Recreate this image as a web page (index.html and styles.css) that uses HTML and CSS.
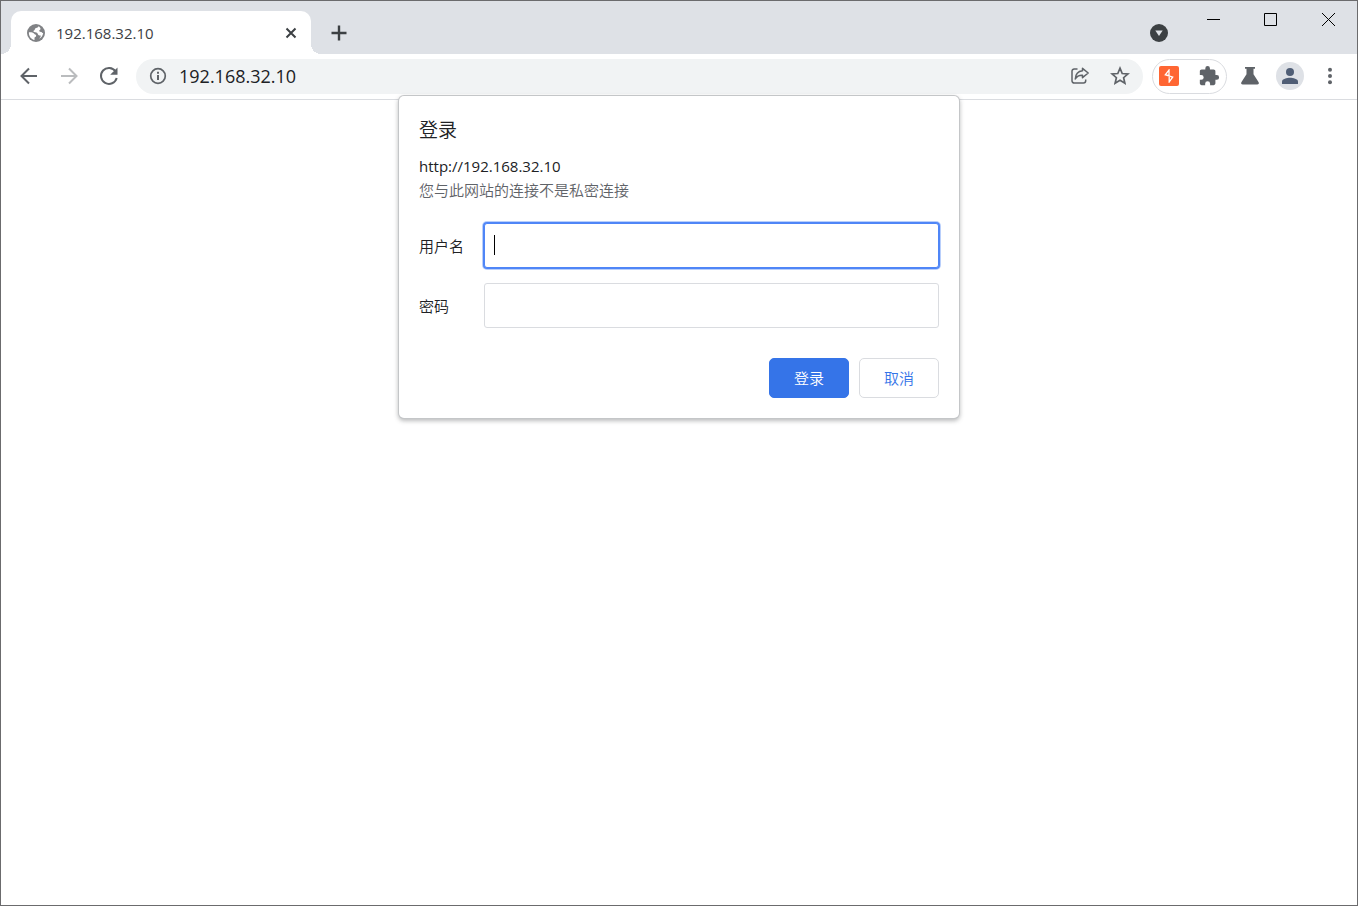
FILE: index.html
```html
<!DOCTYPE html>
<html lang="zh-CN">
<head>
<meta charset="utf-8">
<title>192.168.32.10</title>
<link rel="stylesheet" href="styles.css">
</head>
<body>
<div class="window">
  <header class="tabstrip">
    <div class="tab">
      <svg class="tab-icon" width="20" height="20" viewBox="0 0 20 20" aria-hidden="true">
        <circle cx="10" cy="10" r="9" fill="#808285"/>
        <path fill="#fff" d="M12.600 3.200C12 5.200 10 4.600 9.200 5.500c-.7.700.1 1.500-1.200 2.100-.8.400-.7 1.200.1 1.500 1.500.5 3.400.2 3.700 1.900.3 1.300 1.400 1.500 2.900 1.500.2 1.400-.8 2.200-1.700 3.200A7.200 7.200 0 0 0 17.200 10c-.9 0-1.200-.2-1.600-1-.8-.3-2.200 0-2.400-1.100-.1-1 1.400-1.100 1.300-2.200-.1-.8-.8-1.800-1.900-2.500zM2.900 9.300c1.800-.2 4.500.2 5.100 1.300.8 1.200 2.200.8 2.200 2.200 0 1.200-1.700 1.100-1.700 2.200v2c-3.300-.5-5.900-3.700-5.600-7.700z"/>
      </svg>
      <span class="tab-title">192.168.32.10</span>
      <button class="icon-button tab-close" type="button" aria-label="关闭标签页">
        <svg width="12" height="12" viewBox="0 0 12 12"><path d="M1.500 1.500l9 9M10.500 1.500l-9 9" stroke="#3c4043" stroke-width="2"/></svg>
      </button>
    </div>
    <button class="icon-button new-tab" type="button" aria-label="新标签页">
      <svg width="16" height="16" viewBox="0 0 16 16"><path d="M8 .5v15M.5 8h15" stroke="#3c4043" stroke-width="2.400"/></svg>
    </button>
    <button class="icon-button tab-search" type="button" aria-label="搜索标签页">
      <svg width="18" height="18" viewBox="0 0 18 18"><circle cx="9" cy="9" r="9" fill="#3c4043"/><path d="M5.300 6.500h7.400L9 12z" fill="#dee1e6"/></svg>
    </button>
    <div class="window-controls">
      <button class="icon-button" type="button" aria-label="最小化"><svg width="13" height="13" viewBox="0 0 13 13"><path d="M0 6.500h13" stroke="#000"/></svg></button>
      <button class="icon-button" type="button" aria-label="最大化"><svg width="13" height="13" viewBox="0 0 13 13"><path d="M.5.5h12v12H.5z" fill="none" stroke="#000"/></svg></button>
      <button class="icon-button" type="button" aria-label="关闭"><svg width="13" height="13" viewBox="0 0 13 13"><path d="M0 0l13 13M13 0L0 13" stroke="#000"/></svg></button>
    </div>
  </header>

  <nav class="toolbar">
    <div class="nav-buttons">
      <button class="icon-button" type="button" aria-label="后退"><svg width="24" height="24" viewBox="0 0 24 24"><path d="M20 12H5M12 4.500L4.500 12l7.500 7.500" fill="none" stroke="#5f6368" stroke-width="2"/></svg></button>
      <button class="icon-button" type="button" aria-label="前进"><svg width="24" height="24" viewBox="0 0 24 24"><path d="M4 12h15M12 4.500l7.500 7.500-7.500 7.500" fill="none" stroke="#babcbe" stroke-width="2"/></svg></button>
      <button class="icon-button" type="button" aria-label="重新加载"><svg width="24" height="24" viewBox="0 0 24 24"><path d="M18.600 7.400A8 8 0 1 0 19.700 14" fill="none" stroke="#5f6368" stroke-width="2"/><path d="M20.500 3.500v7.300h-7.300z" fill="#5f6368"/></svg></button>
    </div>
    <div class="omnibox">
      <button class="icon-button site-info" type="button" aria-label="查看网站信息"><svg width="18" height="18" viewBox="0 0 18 18"><circle cx="9" cy="9" r="7.300" fill="none" stroke="#5f6368" stroke-width="1.700"/><path d="M9 8v5M9 4.700v2" stroke="#5f6368" stroke-width="2"/></svg></button>
      <input class="address" type="text" value="192.168.32.10" aria-label="地址和搜索栏">
      <button class="icon-button" type="button" aria-label="分享"><svg width="20" height="20" viewBox="0 0 20 20" fill="none" stroke="#5f6368" stroke-width="1.500" stroke-linejoin="round"><path d="M7.500 3H4.200A2.200 2.200 0 0 0 2 5.200v9.600A2.200 2.200 0 0 0 4.200 17h9.300a2.200 2.200 0 0 0 2.200-2.200v-1.300"/><path d="M12.500 2.300L18.200 7l-5.700 4.700V9.200C9 9 6.800 10.300 5.300 13c.2-4.600 2.500-7.700 7.200-8.200z"/></svg></button>
      <button class="icon-button" type="button" aria-label="添加书签"><svg width="20" height="20" viewBox="0 0 20 20"><path d="M10 2.200l2.200 5.300 5.700.5-4.300 3.700 1.300 5.600-4.900-3-4.900 3 1.300-5.600L2.100 8l5.700-.5z" fill="none" stroke="#5f6368" stroke-width="1.700"/></svg></button>
    </div>
    <div class="extensions">
      <button class="icon-button" type="button" aria-label="Burp Suite"><svg width="20" height="20" viewBox="0 0 20 20"><rect width="20" height="20" rx="2" fill="#ff6633"/><path d="M10.500 3.300L6.300 8.900l3.700.6V4.500M6.500 8.900l7.200 2.200-4 5.600M10.200 11v5.500" fill="none" stroke="#fff" stroke-width="1.300"/></svg></button>
      <button class="icon-button" type="button" aria-label="扩展程序"><svg width="22" height="22" viewBox="0 0 24 24"><path fill="#5f6368" d="M20.500 11H19V7c0-1.100-.9-2-2-2h-4V3.500a2.500 2.500 0 0 0-5 0V5H4c-1.100 0-2 .9-2 2v3.800h1.500a2.700 2.700 0 0 1 0 5.400H2V20c0 1.100.9 2 2 2h3.800v-1.500a2.700 2.700 0 0 1 5.400 0V22H17c1.100 0 2-.9 2-2v-4h1.500a2.500 2.500 0 0 0 0-5z"/></svg></button>
    </div>
    <div class="tools">
      <button class="icon-button" type="button" aria-label="实验"><svg width="20" height="20" viewBox="0 0 20 20"><path fill="#5f6368" d="M5 1h10v1.800h-1.500v5.400l5 7.800c.9 1.500.2 2.500-1.300 2.500H2.800c-1.500 0-2.200-1-1.300-2.500l5-7.800V2.800H5z"/></svg></button>
      <button class="icon-button" type="button" aria-label="用户"><svg width="28" height="28" viewBox="0 0 28 28"><circle cx="14" cy="14" r="14" fill="#dee1e6"/><circle cx="14" cy="10" r="4" fill="#4f5d75"/><path fill="#4f5d75" d="M6 22v-2.500C6 16.800 11 15.700 14 15.700s8 1.100 8 3.800V22z"/></svg></button>
      <button class="icon-button" type="button" aria-label="菜单"><svg width="20" height="20" viewBox="0 0 20 20" fill="#5f6368"><circle cx="10" cy="3.800" r="2"/><circle cx="10" cy="10" r="2"/><circle cx="10" cy="16.200" r="2"/></svg></button>
    </div>
  </nav>

  <main class="page">
    <form class="dialog" role="dialog" aria-labelledby="dialog-title">
      <h1 class="dialog-title" id="dialog-title">登录</h1>
      <p class="dialog-origin">http://192.168.32.10</p>
      <p class="dialog-note">您与此网站的连接不是私密连接</p>
      <div class="fields">
        <label class="field-label" for="username">用户名</label>
        <div class="field">
          <input class="field-input field-input-active" id="username" type="text" autocomplete="off">
          <span class="caret"></span>
        </div>
        <label class="field-label" for="password">密码</label>
        <div class="field">
          <input class="field-input" id="password" type="password">
        </div>
      </div>
      <div class="actions">
        <button class="button button-primary" type="submit">登录</button>
        <button class="button" type="button">取消</button>
      </div>
    </form>
  </main>
</div>
</body>
</html>
```
FILE: styles.css
```css
* {
  box-sizing: border-box;
}

body {
  margin: 0;
  background: #fff;
  color: #202124;
  font-family: "Open Sans", "Noto Sans CJK SC", sans-serif;
  font-size: 15px;
}

button,
input {
  font: inherit;
  color: inherit;
}

svg {
  display: block;
}

.window {
  display: flex;
  flex-direction: column;
  min-height: 100vh;
  border: 1px solid #6b6b6d;
}

.icon-button {
  display: flex;
  align-items: center;
  justify-content: center;
  flex: none;
  padding: 0;
  border: 0;
  background: none;
}

.tabstrip {
  display: flex;
  align-items: center;
  height: 53px;
  padding: 10px 0 0 10px;
  background: #dee1e6;
}

.tab {
  position: relative;
  display: flex;
  align-items: center;
  gap: 10px;
  width: 300px;
  height: 100%;
  padding: 0 14px 0 15px;
  border-radius: 10px 10px 0 0;
  background: #fff;
}

.tab::before,
.tab::after {
  content: "";
  position: absolute;
  bottom: 0;
  width: 10px;
  height: 10px;
}

.tab::before {
  right: 100%;
  background: radial-gradient(circle at 0 0, transparent 10px, #fff 10px);
}

.tab::after {
  left: 100%;
  background: radial-gradient(circle at 100% 0, transparent 10px, #fff 10px);
}

.tab-title {
  flex: 1;
  color: #3c4043;
}

.new-tab {
  margin-left: 20px;
}

.tab-search {
  margin-left: auto;
}

.window-controls {
  display: flex;
  align-self: flex-start;
  width: 172px;
  margin-left: 17px;
}

.window-controls .icon-button {
  flex: 1;
  height: 16px;
}

.toolbar {
  display: flex;
  align-items: center;
  height: 46px;
  padding: 0 17px 1px 16px;
  border-bottom: 1px solid #dadce0;
}

.nav-buttons {
  display: flex;
  gap: 16px;
}

.omnibox {
  display: flex;
  align-items: center;
  flex: 1;
  gap: 20px;
  height: 35px;
  margin-left: 15px;
  padding: 0 13px;
  border-radius: 18px;
  background: #f1f3f4;
}

.address {
  flex: 1;
  min-width: 0;
  margin-left: -8px;
  padding: 0;
  border: 0;
  outline: 0;
  background: none;
  font-size: 18px;
}

.extensions {
  display: flex;
  align-items: center;
  gap: 19px;
  height: 35px;
  margin-left: 9px;
  padding: 0 6px;
  border: 1px solid #dadce0;
  border-radius: 18px;
}

.tools {
  display: flex;
  align-items: center;
  gap: 16px;
  margin-left: 13px;
}

.page {
  position: relative;
  flex: 1;
}

.dialog {
  position: absolute;
  top: -4px;
  left: 50%;
  width: 560px;
  padding: 20px;
  transform: translateX(-50%);
  border-radius: 5px;
  background: #fff;
  box-shadow: 0 0 0 1px #c4c6c8, 0 2px 4px 1px rgba(60, 64, 67, 0.35);
}

.dialog-title {
  margin: 0 0 10px;
  font-size: 19px;
  font-weight: 350;
  line-height: 28px;
}

.dialog-origin {
  margin: 0;
  line-height: 24px;
}

.dialog-note {
  margin: 0 0 20px;
  color: #5f6368;
  line-height: 25px;
}

.fields {
  display: grid;
  grid-template-columns: 65px 1fr;
  align-items: center;
  row-gap: 15px;
}

.field-label {
  font-weight: 350;
}

.dialog-note,
.button {
  font-weight: 350;
}

.field {
  position: relative;
}

.field-input {
  display: block;
  width: 100%;
  height: 45px;
  padding: 0 10px;
  border: 1px solid #dadce0;
  border-radius: 3px;
  outline: 0;
  background: #fff;
}

.field-input-active {
  border-color: #4f86f7;
  box-shadow: 0 0 0 1px #4f86f7, 0 0 0 2px #b9cffb;
}

.caret {
  position: absolute;
  top: 12px;
  left: 10px;
  width: 1px;
  height: 20px;
  background: #000;
}

.actions {
  display: flex;
  justify-content: flex-end;
  gap: 10px;
  margin-top: 30px;
}

.button {
  width: 80px;
  height: 40px;
  padding: 0 0 2px;
  border: 1px solid #dadce0;
  border-radius: 5px;
  background: #fff;
  color: #3574e8;
}

.button-primary {
  border-color: #3574e8;
  background: #3574e8;
  color: #fff;
}
```
